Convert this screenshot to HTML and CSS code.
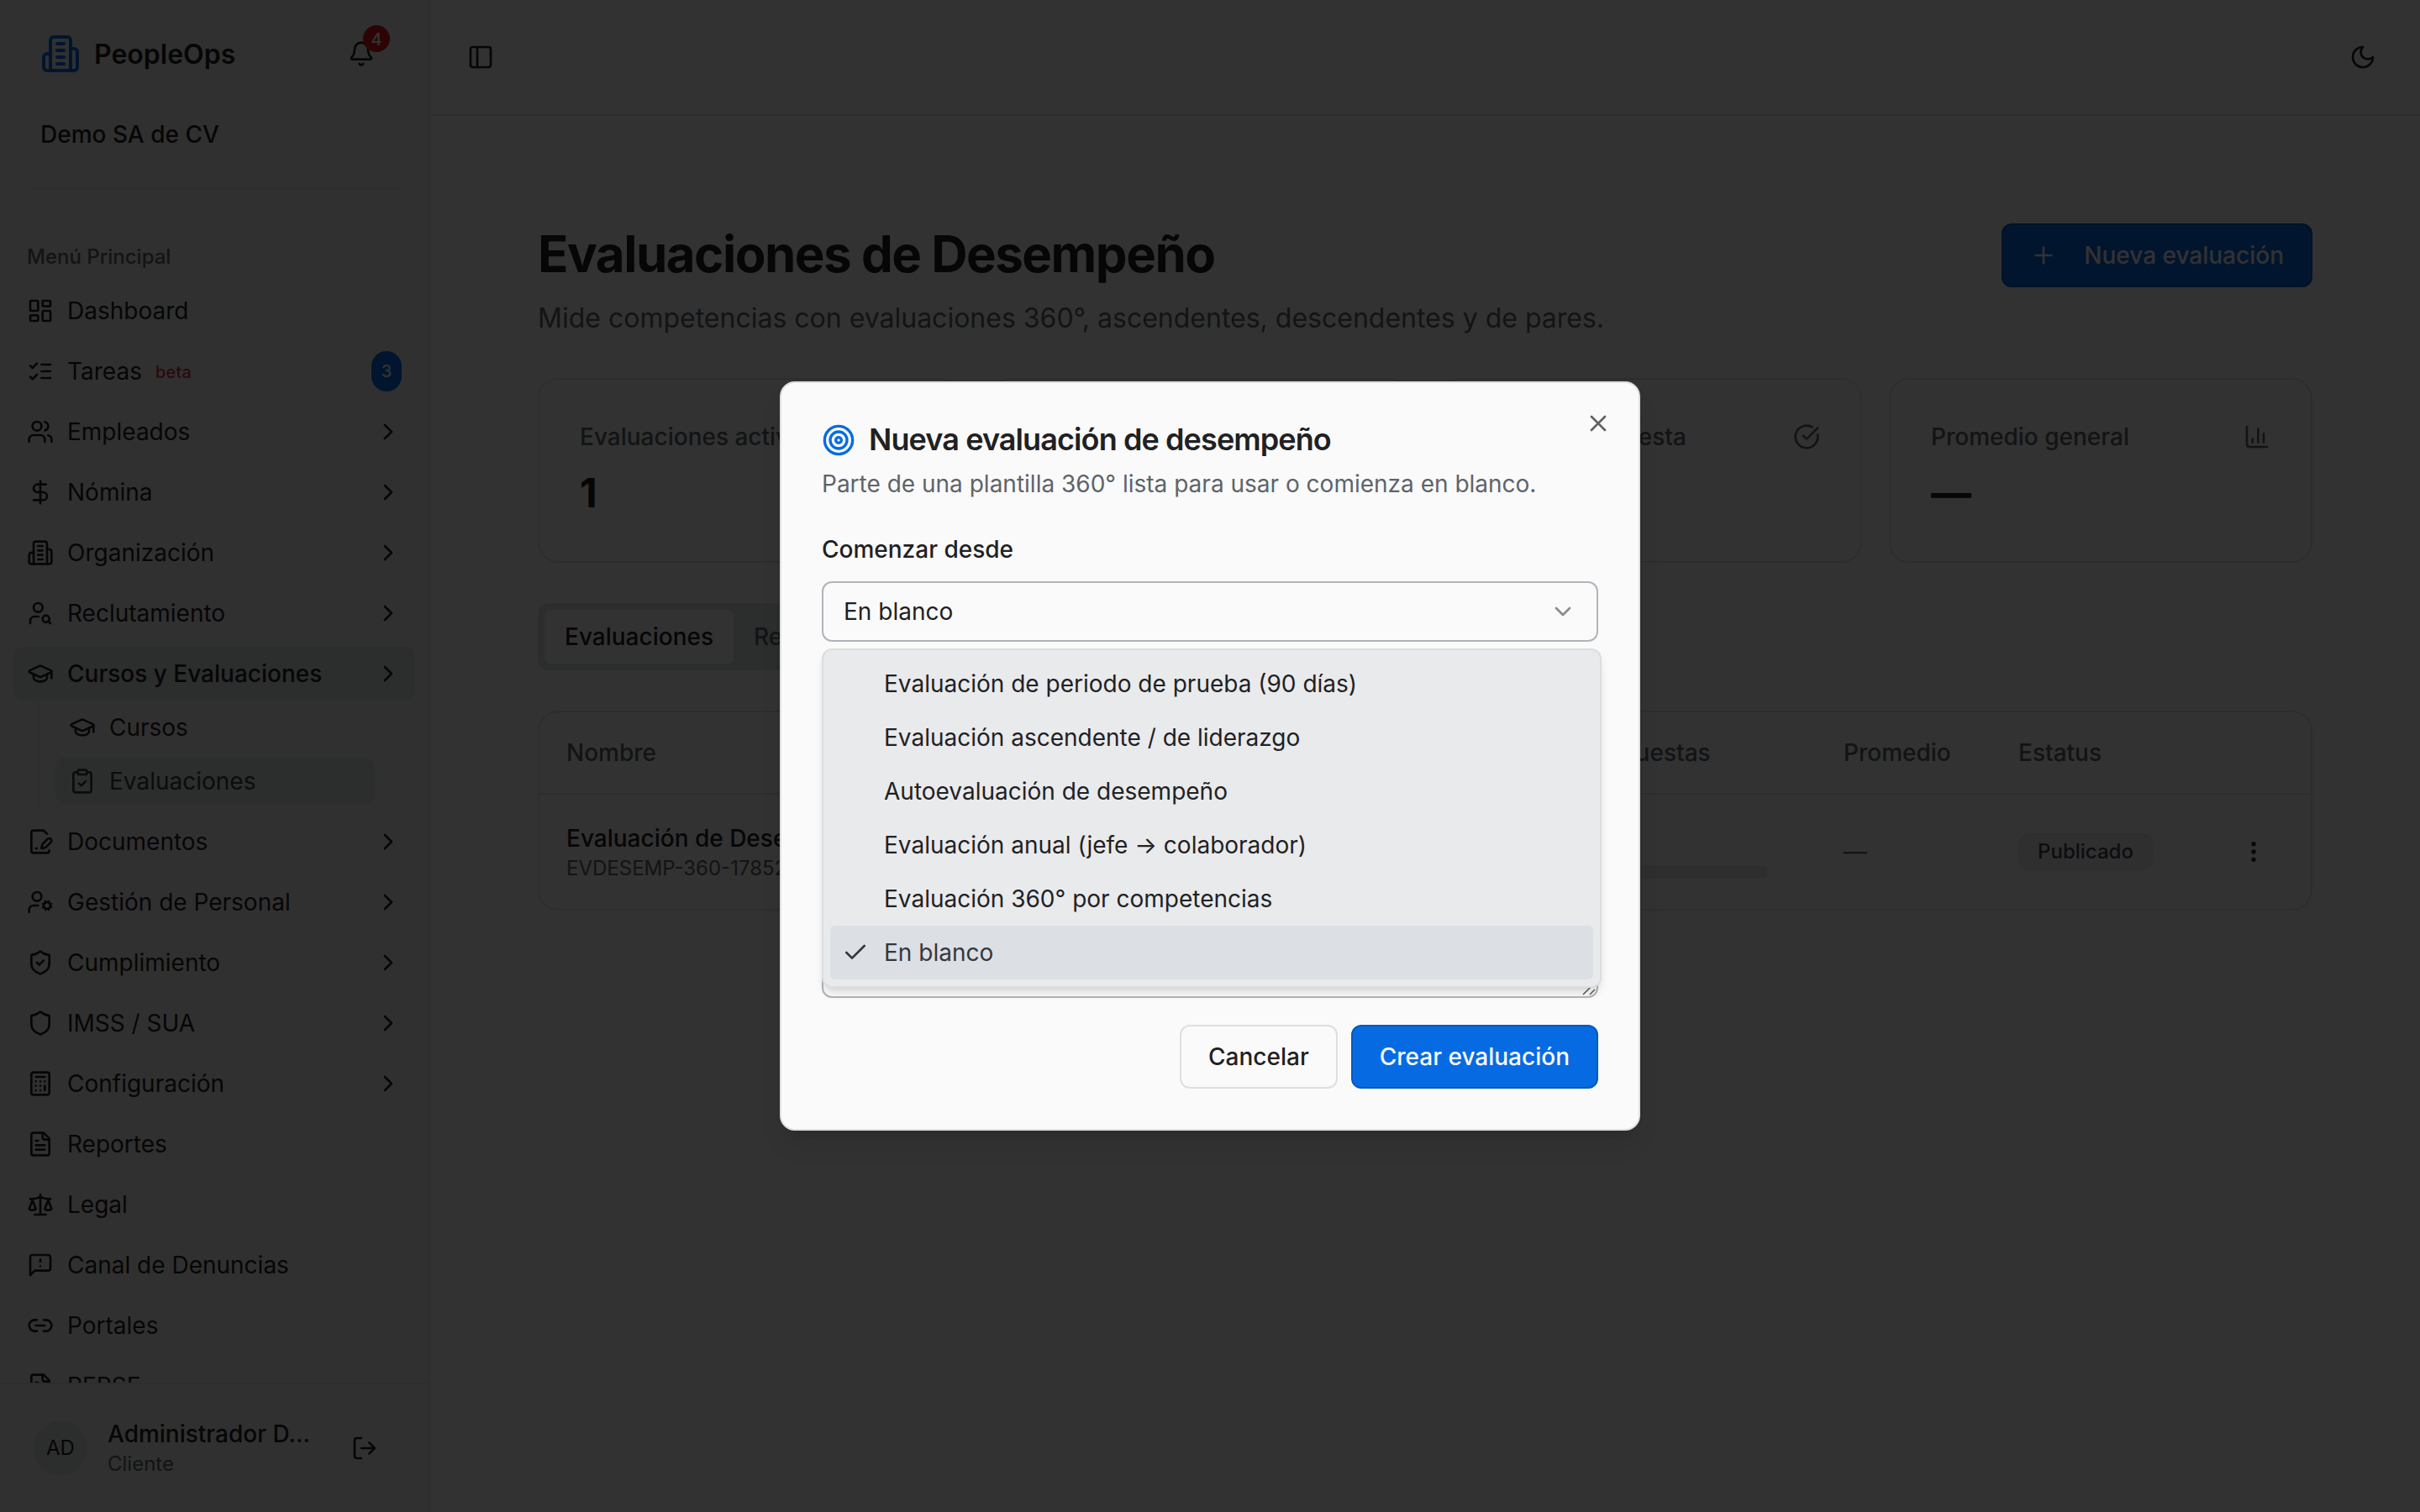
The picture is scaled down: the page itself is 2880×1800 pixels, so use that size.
FILE: index.html
```html
<!DOCTYPE html>
<html lang="es">
<head>
<meta charset="utf-8">
<title>PeopleOps</title>
<link rel="stylesheet" href="styles.css">
</head>
<body>
<svg class="sprite" aria-hidden="true">
  <symbol id="building" viewBox="0 0 24 24"><path d="M6 22V4a2 2 0 0 1 2-2h8a2 2 0 0 1 2 2v18Z"/><path d="M6 12H4a2 2 0 0 0-2 2v6a2 2 0 0 0 2 2h2"/><path d="M18 9h2a2 2 0 0 1 2 2v9a2 2 0 0 1-2 2h-2"/><path d="M10 6h4M10 10h4M10 14h4M10 18h4"/></symbol>
  <symbol id="bell" viewBox="0 0 24 24"><path d="M10.268 21a2 2 0 0 0 3.464 0"/><path d="M3.262 15.326A1 1 0 0 0 4 17h16a1 1 0 0 0 .74-1.673C19.41 13.956 18 12.499 18 8A6 6 0 0 0 6 8c0 4.499-1.411 5.956-2.738 7.326"/></symbol>
  <symbol id="dashboard" viewBox="0 0 24 24"><rect width="7" height="9" x="3" y="3" rx="1"/><rect width="7" height="5" x="14" y="3" rx="1"/><rect width="7" height="9" x="14" y="12" rx="1"/><rect width="7" height="5" x="3" y="16" rx="1"/></symbol>
  <symbol id="checks" viewBox="0 0 24 24"><path d="m3 17 2 2 4-4M3 7l2 2 4-4M13 6h8M13 12h8M13 18h8"/></symbol>
  <symbol id="users" viewBox="0 0 24 24"><path d="M16 21v-2a4 4 0 0 0-4-4H6a4 4 0 0 0-4 4v2"/><circle cx="9" cy="7" r="4"/><path d="M22 21v-2a4 4 0 0 0-3-3.87M16 3.13a4 4 0 0 1 0 7.75"/></symbol>
  <symbol id="dollar" viewBox="0 0 24 24"><path d="M12 2v20M17 5H9.5a3.5 3.5 0 0 0 0 7h5a3.5 3.5 0 0 1 0 7H6"/></symbol>
  <symbol id="user-search" viewBox="0 0 24 24"><circle cx="10" cy="7" r="4"/><path d="M10.3 15H7a4 4 0 0 0-4 4v2"/><circle cx="17" cy="17" r="3"/><path d="m21 21-1.9-1.9"/></symbol>
  <symbol id="cap" viewBox="0 0 24 24"><path d="M21.42 10.922a1 1 0 0 0-.019-1.838L12.83 5.18a2 2 0 0 0-1.66 0L2.6 9.08a1 1 0 0 0 0 1.832l8.57 3.908a2 2 0 0 0 1.66 0z"/><path d="M22 10v6"/><path d="M6 12.5V16a6 3 0 0 0 12 0v-3.5"/></symbol>
  <symbol id="clipboard" viewBox="0 0 24 24"><rect width="8" height="4" x="8" y="2" rx="1"/><path d="M16 4h2a2 2 0 0 1 2 2v14a2 2 0 0 1-2 2H6a2 2 0 0 1-2-2V6a2 2 0 0 1 2-2h2"/><path d="m9 14 2 2 4-4"/></symbol>
  <symbol id="file-pen" viewBox="0 0 24 24"><path d="m18 5-2.414-2.414A2 2 0 0 0 14.172 2H6a2 2 0 0 0-2 2v16a2 2 0 0 0 2 2h12a2 2 0 0 0 2-2"/><path d="M21.378 12.626a1 1 0 0 0-3.004-3.004l-4.01 4.012a2 2 0 0 0-.506.854l-.837 2.87a.5.5 0 0 0 .62.62l2.87-.837a2 2 0 0 0 .854-.506z"/><path d="M8 18h1"/></symbol>
  <symbol id="user-cog" viewBox="0 0 24 24"><circle cx="9" cy="7" r="4"/><path d="M10 15H6a4 4 0 0 0-4 4v2"/><circle cx="18" cy="15" r="3"/><path d="m21.7 16.4-.9-.3M15.2 13.9l-.9-.3M16.6 18.7l.3-.9M19.1 12.2l.3-.9M19.6 18.7l-.4-1M16.8 12.3l-.4-1M14.3 16.6l1-.4M20.7 13.8l1-.4"/></symbol>
  <symbol id="shield" viewBox="0 0 24 24"><path d="M20 13c0 5-3.5 7.5-7.66 8.95a1 1 0 0 1-.67-.01C7.5 20.5 4 18 4 13V6a1 1 0 0 1 1-1c2 0 4.5-1.2 6.24-2.72a1.17 1.17 0 0 1 1.52 0C14.51 3.81 17 5 19 5a1 1 0 0 1 1 1z"/></symbol>
  <symbol id="shield-check" viewBox="0 0 24 24"><path d="M20 13c0 5-3.5 7.5-7.66 8.95a1 1 0 0 1-.67-.01C7.5 20.5 4 18 4 13V6a1 1 0 0 1 1-1c2 0 4.5-1.2 6.24-2.72a1.17 1.17 0 0 1 1.52 0C14.51 3.81 17 5 19 5a1 1 0 0 1 1 1z"/><path d="m9 12 2 2 4-4"/></symbol>
  <symbol id="calculator" viewBox="0 0 24 24"><rect width="16" height="20" x="4" y="2" rx="2"/><path d="M8 6h8M16 14v4M16 10h.01M12 10h.01M8 10h.01M12 14h.01M8 14h.01M12 18h.01M8 18h.01"/></symbol>
  <symbol id="file-text" viewBox="0 0 24 24"><path d="M15 2H6a2 2 0 0 0-2 2v16a2 2 0 0 0 2 2h12a2 2 0 0 0 2-2V7Z"/><path d="M14 2v4a2 2 0 0 0 2 2h4M10 9H8M16 13H8M16 17H8"/></symbol>
  <symbol id="scale" viewBox="0 0 24 24"><path d="m16 16 3-8 3 8c-.87.65-1.92 1-3 1s-2.13-.35-3-1ZM2 16l3-8 3 8c-.87.65-1.92 1-3 1s-2.13-.35-3-1ZM7 21h10M12 3v18M3 7h2c2 0 5-1 7-2 2 1 5 2 7 2h2"/></symbol>
  <symbol id="message" viewBox="0 0 24 24"><path d="M21 15a2 2 0 0 1-2 2H7l-4 4V5a2 2 0 0 1 2-2h14a2 2 0 0 1 2 2zM12 7v2M12 13h.01"/></symbol>
  <symbol id="link" viewBox="0 0 24 24"><path d="M9 17H7A5 5 0 0 1 7 7h2M15 7h2a5 5 0 1 1 0 10h-2M8 12h8"/></symbol>
  <symbol id="logout" viewBox="0 0 24 24"><path d="m16 17 5-5-5-5M21 12H9M9 21H5a2 2 0 0 1-2-2V5a2 2 0 0 1 2-2h4"/></symbol>
  <symbol id="panel" viewBox="0 0 24 24"><rect width="18" height="18" x="3" y="3" rx="2"/><path d="M9 3v18"/></symbol>
  <symbol id="moon" viewBox="0 0 24 24"><path d="M12 3a6 6 0 0 0 9 9 9 9 0 1 1-9-9Z"/></symbol>
  <symbol id="plus" viewBox="0 0 24 24"><path d="M5 12h14M12 5v14"/></symbol>
  <symbol id="circle-check" viewBox="0 0 24 24"><path d="M21.801 10A10 10 0 1 1 17 3.335M9 11l3 3L22 4"/></symbol>
  <symbol id="chart" viewBox="0 0 24 24"><path d="M3 3v16a2 2 0 0 0 2 2h16M18 17V9M13 17V5M8 17v-3"/></symbol>
  <symbol id="dots" viewBox="0 0 24 24"><circle cx="12" cy="12" r="1"/><circle cx="12" cy="5" r="1"/><circle cx="12" cy="19" r="1"/></symbol>
  <symbol id="target" viewBox="0 0 24 24"><circle cx="12" cy="12" r="10"/><circle cx="12" cy="12" r="6"/><circle cx="12" cy="12" r="2"/></symbol>
  <symbol id="right" viewBox="0 0 24 24"><path d="m9 18 6-6-6-6"/></symbol>
  <symbol id="down" viewBox="0 0 24 24"><path d="m6 9 6 6 6-6"/></symbol>
  <symbol id="check" viewBox="0 0 24 24"><path d="M20 6 9 17l-5-5"/></symbol>
  <symbol id="close" viewBox="0 0 24 24"><path d="M18 6 6 18M6 6l12 12"/></symbol>
</svg>

<div class="app">
  <aside class="sidebar">
    <div class="brand-row">
      <svg class="icon brand-icon"><use href="#building"/></svg>
      <span class="brand">PeopleOps</span>
      <span class="bell"><svg class="icon"><use href="#bell"/></svg><span class="bell-count">4</span></span>
    </div>
    <div class="company">Demo SA de CV</div>
    <div class="separator"></div>
    <nav class="nav">
      <div class="nav-label">Menú Principal</div>
      <a class="item"><svg class="icon"><use href="#dashboard"/></svg><span>Dashboard</span></a>
      <a class="item"><svg class="icon"><use href="#checks"/></svg><span>Tareas</span><small class="beta">beta</small><b class="count">3</b></a>
      <a class="item"><svg class="icon"><use href="#users"/></svg><span>Empleados</span><svg class="icon arrow"><use href="#right"/></svg></a>
      <a class="item"><svg class="icon"><use href="#dollar"/></svg><span>Nómina</span><svg class="icon arrow"><use href="#right"/></svg></a>
      <a class="item"><svg class="icon"><use href="#building"/></svg><span>Organización</span><svg class="icon arrow"><use href="#right"/></svg></a>
      <a class="item"><svg class="icon"><use href="#user-search"/></svg><span>Reclutamiento</span><svg class="icon arrow"><use href="#right"/></svg></a>
      <div class="group">
        <a class="item active"><svg class="icon"><use href="#cap"/></svg><span>Cursos y Evaluaciones</span><svg class="icon arrow"><use href="#right"/></svg></a>
        <div class="submenu">
          <a class="item sub"><svg class="icon"><use href="#cap"/></svg><span>Cursos</span></a>
          <a class="item sub current"><svg class="icon"><use href="#clipboard"/></svg><span>Evaluaciones</span></a>
        </div>
      </div>
      <a class="item"><svg class="icon"><use href="#file-pen"/></svg><span>Documentos</span><svg class="icon arrow"><use href="#right"/></svg></a>
      <a class="item"><svg class="icon"><use href="#user-cog"/></svg><span>Gestión de Personal</span><svg class="icon arrow"><use href="#right"/></svg></a>
      <a class="item"><svg class="icon"><use href="#shield-check"/></svg><span>Cumplimiento</span><svg class="icon arrow"><use href="#right"/></svg></a>
      <a class="item"><svg class="icon"><use href="#shield"/></svg><span>IMSS / SUA</span><svg class="icon arrow"><use href="#right"/></svg></a>
      <a class="item"><svg class="icon"><use href="#calculator"/></svg><span>Configuración</span><svg class="icon arrow"><use href="#right"/></svg></a>
      <a class="item"><svg class="icon"><use href="#file-text"/></svg><span>Reportes</span></a>
      <a class="item"><svg class="icon"><use href="#scale"/></svg><span>Legal</span></a>
      <a class="item"><svg class="icon"><use href="#message"/></svg><span>Canal de Denuncias</span></a>
      <a class="item"><svg class="icon"><use href="#link"/></svg><span>Portales</span></a>
      <a class="item"><svg class="icon"><use href="#file-text"/></svg><span>REPSE</span></a>
    </nav>
    <div class="user">
      <span class="avatar">AD</span>
      <div class="user-text"><div class="user-name">Administrador D...</div><div class="user-role">Cliente</div></div>
      <svg class="icon"><use href="#logout"/></svg>
    </div>
  </aside>

  <div class="main">
    <header class="topbar">
      <svg class="icon"><use href="#panel"/></svg>
      <svg class="icon"><use href="#moon"/></svg>
    </header>
    <main class="content">
      <div class="heading">
        <div>
          <h1>Evaluaciones de Desempeño</h1>
          <p class="subtitle">Mide competencias con evaluaciones 360°, ascendentes, descendentes y de pares.</p>
        </div>
        <button class="btn primary new"><svg class="icon"><use href="#plus"/></svg>Nueva evaluación</button>
      </div>
      <section class="cards">
        <div class="card"><div class="card-head">Evaluaciones activas</div><div class="value">1</div></div>
        <div class="card"></div>
        <div class="card"><div class="card-head">Tasa de respuesta<svg class="icon"><use href="#circle-check"/></svg></div></div>
        <div class="card"><div class="card-head">Promedio general<svg class="icon"><use href="#chart"/></svg></div><div class="value">—</div></div>
      </section>
      <div class="tabs"><span class="tab selected">Evaluaciones</span><span class="tab">Resultados</span></div>
      <section class="table">
        <div class="row head"><span>Nombre</span><span>Respuestas</span><span>Promedio</span><span>Estatus</span><span></span></div>
        <div class="row">
          <div><div class="name">Evaluación de Desempeño</div><div class="code">EVDESEMP-360-17852</div></div>
          <div class="progress-cell"><div class="progress"></div></div>
          <span class="muted">—</span>
          <span><span class="badge">Publicado</span></span>
          <svg class="icon"><use href="#dots"/></svg>
        </div>
      </section>
    </main>
  </div>
</div>

<div class="overlay">
  <div class="modal">
    <svg class="icon close"><use href="#close"/></svg>
    <h2><svg class="icon target"><use href="#target"/></svg><span>Nueva evaluación de desempeño</span></h2>
    <p class="desc">Parte de una plantilla 360° lista para usar o comienza en blanco.</p>
    <div class="label">Comenzar desde</div>
    <div class="select">
      <span>En blanco</span><svg class="icon"><use href="#down"/></svg>
      <div class="dropdown">
        <div class="option">Evaluación de periodo de prueba (90 días)</div>
        <div class="option">Evaluación ascendente / de liderazgo</div>
        <div class="option">Autoevaluación de desempeño</div>
        <div class="option">Evaluación anual (jefe → colaborador)</div>
        <div class="option">Evaluación 360° por competencias</div>
        <div class="option chosen"><svg class="icon"><use href="#check"/></svg>En blanco</div>
      </div>
    </div>
    <div class="textarea"><svg class="grip" viewBox="0 0 18 18"><path d="M2 16 16 2M10 16l6-6"/></svg></div>
    <div class="actions"><button class="btn">Cancelar</button><button class="btn primary">Crear evaluación</button></div>
  </div>
</div>
</body>
</html>
```
FILE: styles.css
```css
:root {
  --bg: #fafafa;
  --sidebar: #f1f1f1;
  --fg: #1f2123;
  --muted: #5d646b;
  --border: #e2e2e2;
  --accent: #dbe0de;
  --primary: #066be3;
}
* { box-sizing: border-box; }
body {
  margin: 0;
  width: 2880px;
  height: 1800px;
  overflow: hidden;
  background: var(--bg);
  color: var(--fg);
  font: 400 28px/40px Inter, "Liberation Sans", sans-serif;
}
h1, h2, p { margin: 0; }
.sprite { display: none; }
.icon {
  flex: none;
  width: 32px;
  height: 32px;
  fill: none;
  stroke: currentColor;
  stroke-width: 2;
  stroke-linecap: round;
  stroke-linejoin: round;
}
.app { display: flex; height: 1800px; }

/* Sidebar */
.sidebar {
  flex: none;
  display: flex;
  flex-direction: column;
  width: 512px;
  padding-top: 40px;
  background: var(--sidebar);
  border-right: 2px solid var(--border);
}
.brand-row { display: flex; align-items: center; height: 48px; padding: 0 64px 0 48px; }
.brand-icon { width: 48px; height: 48px; color: var(--primary); }
.brand { flex: 1; margin-left: 16px; padding-top: 2px; font-size: 32px; font-weight: 600; }
.bell { position: relative; width: 32px; height: 32px; }
.bell .icon { display: block; }
.bell-count {
  position: absolute;
  left: 18px;
  top: -18px;
  width: 32px;
  height: 32px;
  border-radius: 50%;
  background: #dc1414;
  color: #fafafa;
  font-size: 20px;
  font-weight: 500;
  line-height: 34px;
  text-align: center;
}
.company { margin: 52px 48px 0; font-weight: 500; }
.separator { margin: 44px 32px 0; height: 2px; background: #e6e6e6; }
.nav {
  flex: 1;
  min-height: 0;
  overflow: hidden;
  display: flex;
  flex-direction: column;
  gap: 8px;
  padding: 48px 16px 0;
}
.nav-label {
  flex: none;
  height: 64px;
  margin-bottom: -8px;
  padding-left: 16px;
  color: var(--muted);
  font-size: 24px;
  font-weight: 500;
  line-height: 64px;
}
.item {
  flex: none;
  display: flex;
  align-items: center;
  gap: 16px;
  height: 64px;
  padding: 0 16px;
  border-radius: 12px;
  white-space: nowrap;
}
.arrow { margin-left: auto; }
.beta { padding-top: 2px; color: #e03131; font-size: 20px; font-weight: 500; letter-spacing: .2px; }
.count {
  width: 36px;
  height: 48px;
  margin-left: auto;
  border-radius: 18px;
  background: var(--primary);
  color: #fafafa;
  font-size: 20px;
  font-weight: 500;
  line-height: 49px;
  text-align: center;
}
.active { background: var(--accent); font-weight: 500; }
.submenu {
  display: flex;
  flex-direction: column;
  gap: 8px;
  margin-left: 30px;
  padding: 4px 48px 4px 18px;
  border-left: 2px solid var(--border);
}
.sub { height: 56px; }
.current { background: var(--accent); color: #3a3e42; }
.user {
  flex: none;
  display: flex;
  align-items: center;
  height: 154px;
  padding: 0 60px 0 40px;
  border-top: 2px solid var(--border);
}
.avatar {
  width: 64px;
  height: 64px;
  border: 2px solid var(--border);
  border-radius: 50%;
  background: var(--accent);
  font-size: 24px;
  line-height: 60px;
  text-align: center;
}
.user-text { flex: 1; padding-left: 24px; }
.user-name { height: 38px; font-weight: 500; line-height: 38px; }
.user-role { color: var(--muted); font-size: 24px; line-height: 34px; }

/* Main area */
.main { flex: 1; min-width: 0; }
.topbar {
  display: flex;
  align-items: center;
  justify-content: space-between;
  height: 138px;
  padding: 0 52px 0 44px;
  border-bottom: 2px solid var(--border);
}
.content { padding: 126px 128px 0; }
.heading { display: flex; align-items: flex-start; justify-content: space-between; height: 186px; }
h1 { font-size: 60px; font-weight: 700; line-height: 76px; letter-spacing: -1.5px; }
.subtitle { margin-top: 3px; color: var(--muted); font-size: 32px; line-height: 72px; }
.heading .new { margin-top: 2px; }
.btn {
  display: inline-flex;
  align-items: center;
  gap: 32px;
  height: 76px;
  padding: 0 32px;
  border: 2px solid #dedfe0;
  border-radius: 12px;
  background: transparent;
  color: var(--fg);
  font: 500 28px/40px Inter, "Liberation Sans", sans-serif;
  white-space: nowrap;
}
.primary { background: var(--primary); border-color: #0559be; color: #fafafa; }
.cards { display: grid; grid-template-columns: repeat(4, 1fr); gap: 32px; }
.card {
  height: 220px;
  padding: 48px;
  border: 2px solid var(--border);
  border-radius: 24px;
  background: #f7f7f7;
}
.card-head { display: flex; align-items: center; justify-content: space-between; color: var(--muted); font-weight: 500; }
.value { margin-top: 15px; font-size: 48px; font-weight: 700; line-height: 64px; letter-spacing: -.5px; }
.tabs {
  display: inline-flex;
  height: 80px;
  margin-top: 48px;
  padding: 8px;
  border-radius: 12px;
  background: var(--accent);
}
.tab { padding: 12px 24px; border-radius: 8px; color: var(--muted); font-weight: 500; }
.selected { background: var(--bg); color: var(--fg); }
.table {
  margin-top: 48px;
  border: 2px solid var(--border);
  border-radius: 24px;
  background: #f7f7f7;
}
.row {
  display: grid;
  grid-template-columns: 1206px 314px 208px 264px 1fr;
  align-items: center;
  height: 136px;
  padding: 0 32px;
}
.head { height: 98px; border-bottom: 2px solid var(--border); color: var(--muted); font-weight: 500; }
.name { font-weight: 500; }
.code { color: var(--muted); font-size: 24px; line-height: 32px; }
.muted { color: var(--muted); }
.progress-cell { padding-top: 48px; }
.progress { width: 224px; height: 16px; border-radius: 8px; background: #e6e6e6; }
.badge {
  display: block;
  width: 160px;
  height: 44px;
  border: 2px solid #e4e4e4;
  border-radius: 12px;
  background: #ebebec;
  color: #3b4050;
  font-size: 24px;
  font-weight: 500;
  line-height: 40px;
  text-align: center;
}

/* Dialog */
.overlay {
  position: absolute;
  inset: 0;
  display: flex;
  align-items: center;
  justify-content: center;
  background: rgba(0, 0, 0, .8);
}
.modal {
  position: relative;
  width: 1024px;
  height: 892px;
  padding: 48px;
  border: 2px solid #dedfe0;
  border-radius: 18px;
  background: var(--bg);
  box-shadow: 0 20px 30px -6px rgba(0, 0, 0, .1), 0 8px 12px -8px rgba(0, 0, 0, .1);
}
.close { position: absolute; right: 32px; top: 32px; opacity: .7; }
h2 {
  display: flex;
  align-items: center;
  gap: 16px;
  height: 40px;
  font-size: 36px;
  font-weight: 600;
  letter-spacing: -.9px;
}
h2 span { padding-bottom: 2px; }
.target { width: 40px; height: 40px; color: var(--primary); }
.desc { margin-top: 12px; color: var(--muted); }
.label { margin-top: 38px; font-weight: 500; }
.select {
  position: relative;
  display: flex;
  align-items: center;
  justify-content: space-between;
  height: 72px;
  margin-top: 18px;
  padding: 0 24px;
  border: 2px solid #afb4ba;
  border-radius: 12px;
}
.select > .icon { opacity: .5; }
.dropdown {
  position: absolute;
  z-index: 1;
  left: -2px;
  top: 78px;
  width: 928px;
  padding: 8px;
  border: 2px solid #dcddde;
  border-radius: 12px;
  background: #e9eaec;
  box-shadow: 0 8px 12px -2px rgba(0, 0, 0, .1), 0 4px 8px -4px rgba(0, 0, 0, .1);
}
.option {
  position: relative;
  height: 64px;
  padding-left: 64px;
  border-radius: 6px;
  line-height: 65px;
}
.option .icon { position: absolute; left: 14px; top: 16px; }
.chosen { background: #dcdfe4; color: #34383c; }
.textarea {
  display: flex;
  align-items: flex-end;
  justify-content: flex-end;
  height: 160px;
  margin-top: 264px;
  border: 2px solid #afb4ba;
  border-radius: 12px;
}
.grip { width: 18px; height: 18px; fill: none; stroke: #55585b; stroke-width: 1.5; }
.actions { display: flex; justify-content: flex-end; gap: 16px; margin-top: 32px; }
```
